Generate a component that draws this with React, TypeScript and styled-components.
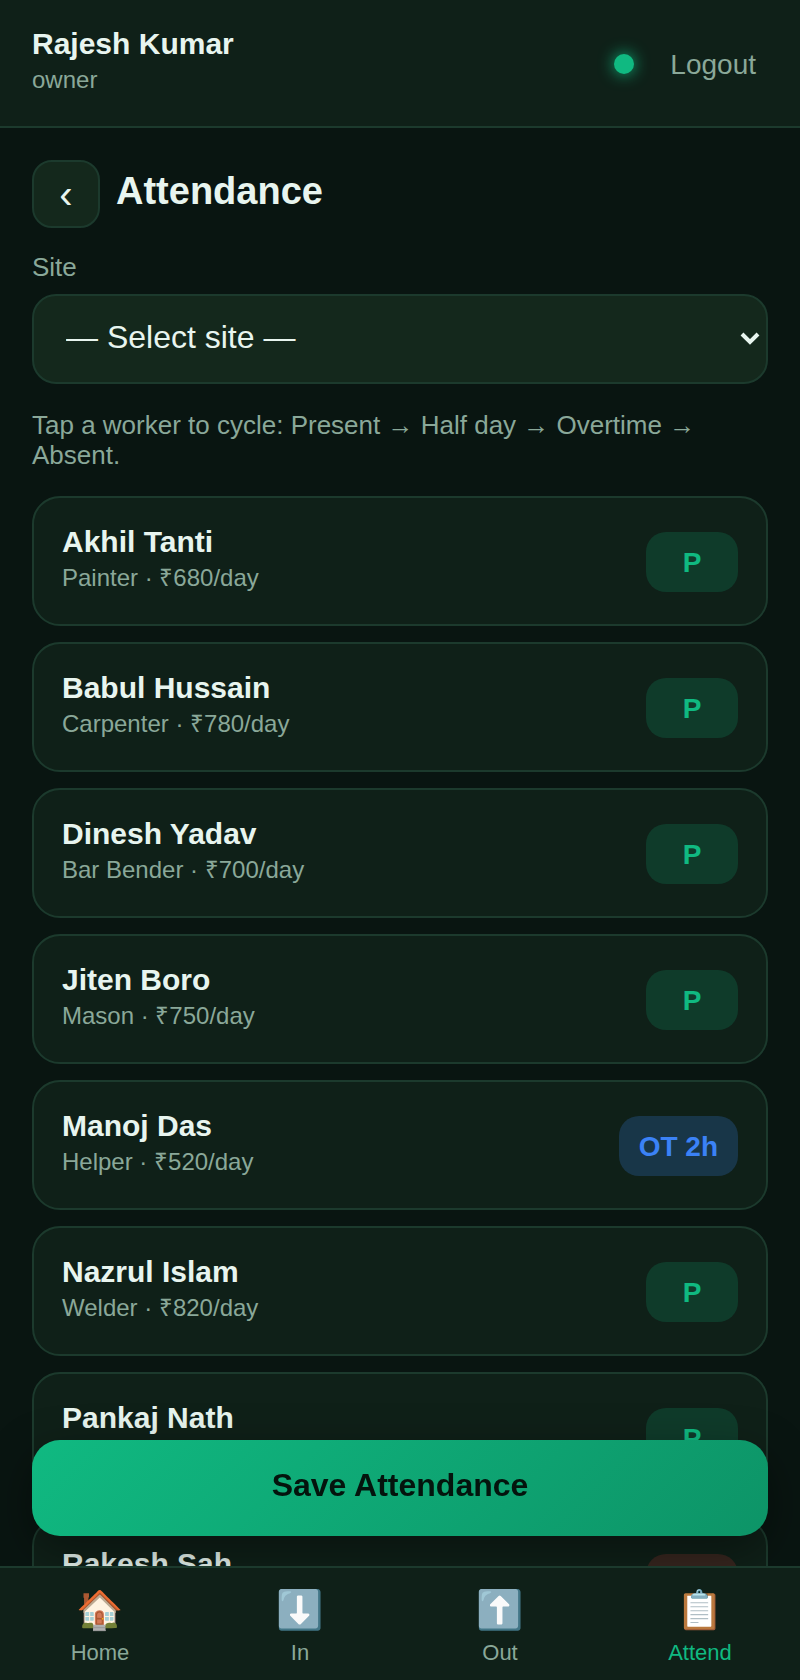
import React, { useState } from "react";
import styled, { createGlobalStyle, css } from "styled-components";

const color = {
  bg: "#091511",
  surface: "#0f2018",
  field: "#14281c",
  line: "#1c3a2d",
  text: "#e8f5ef",
  muted: "#8aa899",
  accent: "#10b981",
};

const GlobalStyle = createGlobalStyle`
  *, *::before, *::after { box-sizing: border-box; }
  body {
    margin: 0;
    background: ${color.bg};
    color: ${color.text};
    font-family: "Liberation Sans", Arial, sans-serif;
  }
  button, select { font-family: inherit; color: inherit; }
`;

const Shell = styled.div`
  height: 100vh;
  display: flex;
  flex-direction: column;
`;

const TopBar = styled.header`
  flex: none;
  display: flex;
  align-items: center;
  justify-content: space-between;
  padding: 28px 32px 26px;
  background: ${color.surface};
  border-bottom: 2px solid ${color.line};
`;

const Info = styled.span`
  display: flex;
  flex-direction: column;
  gap: 6px;
  min-height: 72px;
  text-align: left;
`;

const Name = styled.strong`
  font-size: 30px;
  line-height: 32px;
  font-weight: 700;
`;

const Detail = styled.span`
  font-size: 24px;
  line-height: 28px;
  color: ${color.muted};
`;

const Session = styled.div`
  display: flex;
  align-items: center;
  gap: 24px;
`;

const OnlineDot = styled.span`
  width: 20px;
  height: 20px;
  border-radius: 50%;
  background: ${color.accent};
  box-shadow: 0 0 16px ${color.accent};
`;

const LogoutButton = styled.button`
  padding: 14px 12px 12px;
  border: 0;
  background: none;
  font-size: 28px;
  line-height: 32px;
  color: ${color.muted};
  cursor: pointer;
`;

const Content = styled.main`
  flex: 1;
  min-height: 0;
  overflow-y: auto;
  scrollbar-width: none;
  padding: 32px 32px 0;
`;

const TitleRow = styled.div`
  display: flex;
  gap: 16px;
`;

const BackButton = styled.button`
  width: 68px;
  height: 68px;
  padding: 0;
  border: 2px solid ${color.line};
  border-radius: 20px;
  background: ${color.field};
  font-size: 40px;
  line-height: 44px;
  cursor: pointer;
`;

const Title = styled.h1`
  margin: 0;
  font-size: 38px;
  line-height: 62px;
`;

const FieldLabel = styled.label`
  display: block;
  margin: 24px 0 12px;
  font-size: 26px;
  line-height: 30px;
  color: ${color.muted};
`;

const SelectBox = styled.div`
  display: grid;
  align-items: center;

  > * { grid-area: 1 / 1; }
`;

const Select = styled.select`
  appearance: none;
  width: 100%;
  height: 90px;
  padding: 0 32px 4px;
  border: 2px solid ${color.line};
  border-radius: 24px;
  background: ${color.field};
  font-size: 32px;
`;

const Chevron = styled.svg`
  justify-self: end;
  margin-right: 8px;
  pointer-events: none;
`;

const Hint = styled.p`
  margin: 26px 0 0;
  font-size: 26px;
  line-height: 30px;
  color: ${color.muted};
`;

const WorkerList = styled.ul`
  display: flex;
  flex-direction: column;
  gap: 16px;
  margin: 26px 0 32px;
  padding: 0;
  list-style: none;
`;

const WorkerCard = styled.button`
  display: flex;
  align-items: center;
  justify-content: space-between;
  width: 100%;
  padding: 28px 28px 26px;
  border: 2px solid ${color.line};
  border-radius: 28px;
  background: ${color.surface};
  cursor: pointer;
`;

type Status = "present" | "half" | "overtime" | "absent";

const tones = {
  present: css`background: rgba(16, 185, 129, 0.18); color: #10b981;`,
  half: css`background: rgba(245, 158, 11, 0.18); color: #f59e0b;`,
  overtime: css`background: rgba(59, 130, 246, 0.22); color: #3b82f6;`,
  absent: css`background: rgba(239, 68, 68, 0.18); color: #ef4444;`,
};

const Badge = styled.span<{ $status: Status }>`
  min-width: 92px;
  padding: 15px 20px 13px;
  border-radius: 20px;
  font-size: 28px;
  line-height: 32px;
  font-weight: 700;
  text-align: center;
  ${({ $status }) => tones[$status]}
`;

const SaveButton = styled.button`
  position: sticky;
  bottom: 30px;
  display: block;
  width: 100%;
  height: 96px;
  margin-bottom: 30px;
  padding: 0 32px 6px;
  border: 0;
  border-radius: 28px;
  background: linear-gradient(135deg, #10b981, #0d9467);
  box-shadow: 0 16px 48px rgba(0, 0, 0, 0.4);
  color: #04140d;
  font-size: 32px;
  font-weight: 700;
  cursor: pointer;
`;

const TabBar = styled.nav`
  flex: none;
  display: grid;
  grid-template-columns: repeat(4, 1fr);
  padding: 16px 0 14px;
  background: ${color.surface};
  border-top: 2px solid ${color.line};
`;

const Tab = styled.a<{ $active?: boolean }>`
  display: flex;
  flex-direction: column;
  align-items: center;
  gap: 4px;
  font-size: 22px;
  line-height: 26px;
  text-decoration: none;
  color: ${({ $active }) => ($active ? color.accent : color.muted)};
`;

const TabIcon = styled.span`
  font-family: "Noto Color Emoji", "Liberation Sans", sans-serif;
  font-size: 38px;
  line-height: 52px;
`;

const cycle: Status[] = ["present", "half", "overtime", "absent"];
const marks: Record<Status, string> = {
  present: "P",
  half: "½",
  overtime: "OT 2h",
  absent: "A",
};

const initialWorkers: { name: string; role: string; rate: number; status: Status }[] = [
  { name: "Akhil Tanti", role: "Painter", rate: 680, status: "present" },
  { name: "Babul Hussain", role: "Carpenter", rate: 780, status: "present" },
  { name: "Dinesh Yadav", role: "Bar Bender", rate: 700, status: "present" },
  { name: "Jiten Boro", role: "Mason", rate: 750, status: "present" },
  { name: "Manoj Das", role: "Helper", rate: 520, status: "overtime" },
  { name: "Nazrul Islam", role: "Welder", rate: 820, status: "present" },
  { name: "Pankaj Nath", role: "Helper", rate: 520, status: "present" },
  { name: "Rakesh Sah", role: "Mason", rate: 750, status: "absent" },
];

const tabs = [
  { icon: "🏠", label: "Home" },
  { icon: "⬇️", label: "In" },
  { icon: "⬆️", label: "Out" },
  { icon: "📋", label: "Attend", active: true },
];

export default function App() {
  const [workers, setWorkers] = useState(initialWorkers);

  const advance = (name: string) =>
    setWorkers((list) =>
      list.map((w) =>
        w.name === name
          ? { ...w, status: cycle[(cycle.indexOf(w.status) + 1) % cycle.length] }
          : w
      )
    );

  return (
    <Shell>
      <GlobalStyle />
      <TopBar>
        <Info>
          <Name>Rajesh Kumar</Name>
          <Detail>owner</Detail>
        </Info>
        <Session>
          <OnlineDot />
          <LogoutButton type="button">Logout</LogoutButton>
        </Session>
      </TopBar>

      <Content>
        <TitleRow>
          <BackButton type="button" aria-label="Back">‹</BackButton>
          <Title>Attendance</Title>
        </TitleRow>

        <FieldLabel htmlFor="site">Site</FieldLabel>
        <SelectBox>
          <Select id="site">
            <option>— Select site —</option>
          </Select>
          <Chevron width="20" height="14" viewBox="0 0 20 14" fill="none" aria-hidden="true">
            <path d="M2 2 10 10l8-8" stroke={color.text} strokeWidth="4" />
          </Chevron>
        </SelectBox>

        <Hint>Tap a worker to cycle: Present → Half day → Overtime → Absent.</Hint>

        <WorkerList>
          {workers.map((w) => (
            <li key={w.name}>
              <WorkerCard type="button" onClick={() => advance(w.name)}>
                <Info>
                  <Name>{w.name}</Name>
                  <Detail>{`${w.role} · ₹${w.rate}/day`}</Detail>
                </Info>
                <Badge $status={w.status}>{marks[w.status]}</Badge>
              </WorkerCard>
            </li>
          ))}
        </WorkerList>

        <SaveButton type="button">Save Attendance</SaveButton>
      </Content>

      <TabBar>
        {tabs.map((t) => (
          <Tab key={t.label} href="#" $active={t.active}>
            <TabIcon aria-hidden="true">{t.icon}</TabIcon>
            {t.label}
          </Tab>
        ))}
      </TabBar>
    </Shell>
  );
}
